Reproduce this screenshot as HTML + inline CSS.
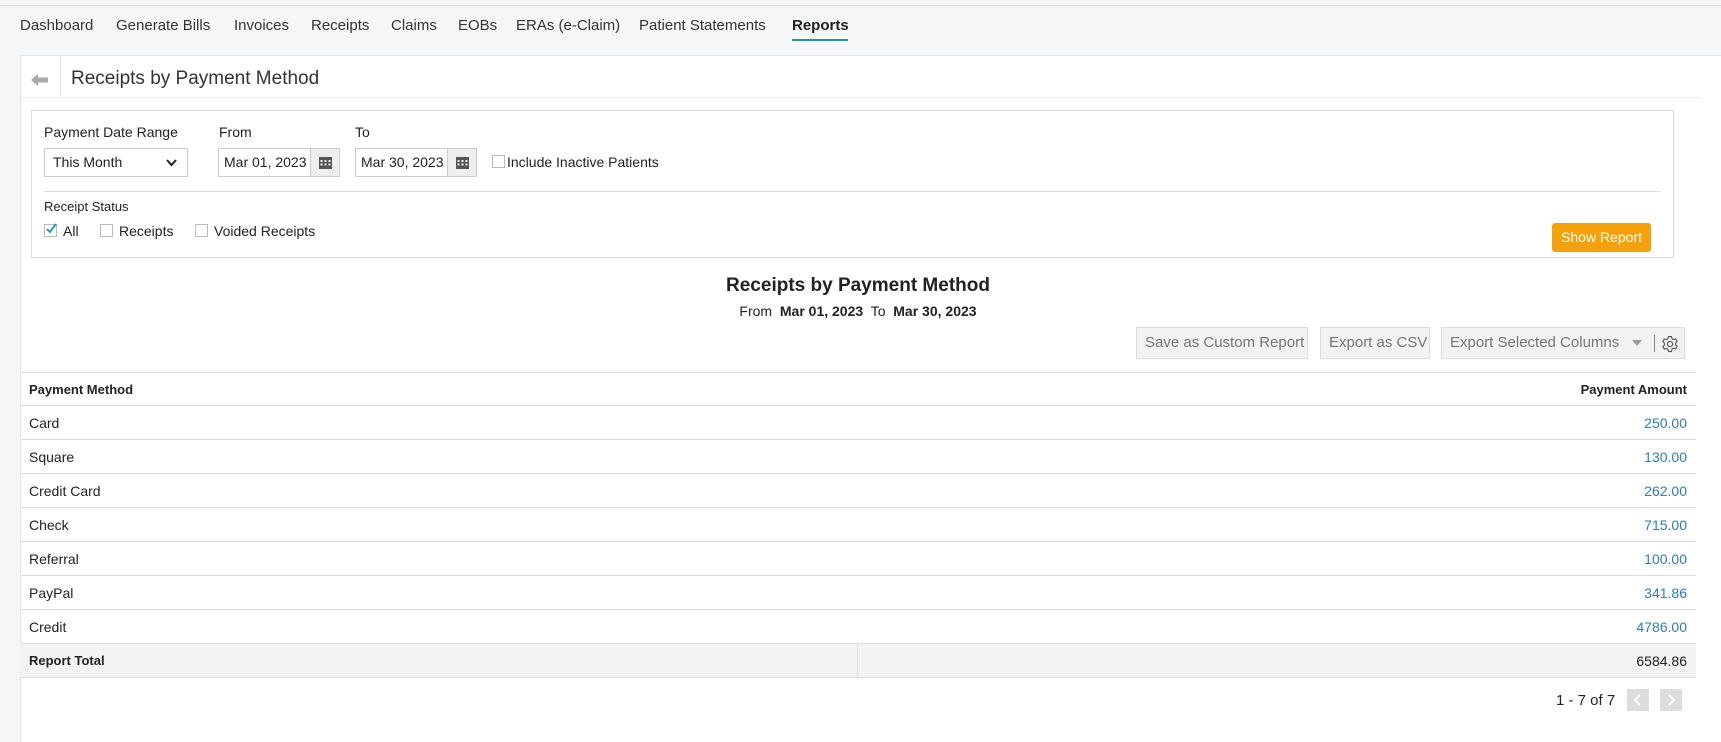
<!DOCTYPE html>
<html><head><meta charset="utf-8"><style>
*{box-sizing:border-box;margin:0;padding:0}
body{width:1721px;height:742px;overflow:hidden;background:#f5f6f8;font-family:"Liberation Sans",sans-serif;font-size:14px;color:#222;position:relative}
.a{position:absolute;white-space:nowrap}
.nav{top:17px;font-size:15px;color:#333}
.panel{position:absolute;left:20px;top:55px;width:1701px;height:687px;background:#fff;border-left:1px solid #e3e3e3;border-top:1px solid #e6e6e6}
.box{position:absolute;left:31px;top:110px;width:1643px;height:148px;border:1px solid #ddd;background:#fff}
.inp{position:absolute;border:1px solid #ccc;background:#fff;height:29px;font-size:14px;line-height:27px}
.cal{position:absolute;right:0;top:0;width:29px;height:27px;background:#eee;border-left:1px solid #ccc}
.cb{position:absolute;width:13px;height:13px;border:1px solid #bbb;background:#fff}
.btn{position:absolute;top:327px;height:32px;background:#f2f2f2;border:1px solid #ddd;color:#777;font-size:15px;line-height:30px;padding-left:8px}
.row{position:absolute;left:20px;width:1676px;height:34px;border-bottom:1px solid #ddd;line-height:34px}
.row span.l{position:absolute;left:9px}
.row span.r{position:absolute;right:9px;color:#2f7db5}
</style></head><body>
<div class="a" style="left:0;top:5px;width:1721px;height:1px;background:#e0e0e0"></div>
<div class="a nav" style="left:20px">Dashboard</div>
<div class="a nav" style="left:116px">Generate Bills</div>
<div class="a nav" style="left:234px">Invoices</div>
<div class="a nav" style="left:311px">Receipts</div>
<div class="a nav" style="left:391px">Claims</div>
<div class="a nav" style="left:458px">EOBs</div>
<div class="a nav" style="left:516px">ERAs (e-Claim)</div>
<div class="a nav" style="left:639px">Patient Statements</div>
<div class="a nav" style="left:792px;font-weight:bold;color:#222">Reports</div>
<div class="a" style="left:792px;top:39px;width:56px;height:2px;background:#1f9a9a"></div>
<div class="panel"></div>
<svg class="a" style="left:31px;top:73px" width="18" height="14"><path d="M0 7 L7 1 L7 4.5 L17 4.5 L17 9.5 L7 9.5 L7 13 Z" fill="#aaa"/></svg>
<div class="a" style="left:60px;top:56px;width:1px;height:42px;background:#e3e3e3"></div>
<div class="a" style="left:71px;top:68px;font-size:19px;color:#333">Receipts by Payment Method</div>
<div class="a" style="left:21px;top:97px;width:1680px;height:1px;background:#eee"></div>
<div class="box"></div>
<div class="a" style="left:44px;top:124px">Payment Date Range</div>
<div class="a" style="left:219px;top:124px">From</div>
<div class="a" style="left:355px;top:124px">To</div>
<div class="inp" style="left:44px;top:148px;width:144px;padding-left:8px">This Month<svg style="position:absolute;right:10px;top:10px" width="11" height="8"><path d="M1 1 L5.5 6 L10 1" stroke="#222" stroke-width="2" fill="none"/></svg></div>
<div class="inp" style="left:218px;top:148px;width:122px;padding-left:5px">Mar 01, 2023<div class="cal"><svg style="margin:7px 8px" width="13" height="13"><rect x="0" y="1" width="13" height="12" fill="#555"/><g fill="#eee"><rect x="1.5" y="4" width="2" height="2"/><rect x="5.5" y="4" width="2" height="2"/><rect x="9.5" y="4" width="2" height="2"/><rect x="1.5" y="7.5" width="2" height="2"/><rect x="5.5" y="7.5" width="2" height="2"/><rect x="9.5" y="7.5" width="2" height="2"/></g></svg></div></div>
<div class="inp" style="left:355px;top:148px;width:122px;padding-left:5px">Mar 30, 2023<div class="cal"><svg style="margin:7px 8px" width="13" height="13"><rect x="0" y="1" width="13" height="12" fill="#555"/><g fill="#eee"><rect x="1.5" y="4" width="2" height="2"/><rect x="5.5" y="4" width="2" height="2"/><rect x="9.5" y="4" width="2" height="2"/><rect x="1.5" y="7.5" width="2" height="2"/><rect x="5.5" y="7.5" width="2" height="2"/><rect x="9.5" y="7.5" width="2" height="2"/></g></svg></div></div>
<div class="cb" style="left:492px;top:155px"></div>
<div class="a" style="left:507px;top:154px">Include Inactive Patients</div>
<div class="a" style="left:44px;top:191px;width:1617px;height:1px;background:#ddd"></div>
<div class="a" style="left:44px;top:199px;font-size:13px">Receipt Status</div>
<div class="cb" style="left:44px;top:224px"></div>
<svg class="a" style="left:45px;top:222px" width="13" height="13"><path d="M2 7 L5 10 L11 2" stroke="#2a9bb5" stroke-width="2" fill="none"/></svg>
<div class="a" style="left:63px;top:223px">All</div>
<div class="cb" style="left:100px;top:224px"></div>
<div class="a" style="left:119px;top:223px">Receipts</div>
<div class="cb" style="left:195px;top:224px"></div>
<div class="a" style="left:214px;top:223px">Voided Receipts</div>
<div class="a" style="left:1552px;top:223px;width:99px;height:29px;background:#f5a10a;border-radius:3px;color:#fff;font-size:14px;line-height:29px;text-align:center">Show Report</div>
<div class="a" style="left:20px;top:275px;width:1676px;text-align:center;font-size:19px;font-weight:bold">Receipts by Payment Method</div>
<div class="a" style="left:20px;top:303px;width:1676px;text-align:center;font-size:14px">From &nbsp;<b>Mar 01, 2023</b>&nbsp; To &nbsp;<b>Mar 30, 2023</b></div>
<div class="btn" style="left:1136px;width:172px">Save as Custom Report</div>
<div class="btn" style="left:1320px;width:110px">Export as CSV</div>
<div class="btn" style="left:1441px;width:244px">Export Selected Columns<svg style="position:absolute;left:190px;top:12px" width="10" height="6"><path d="M0 0 L10 0 L5 6Z" fill="#999"/></svg><span style="position:absolute;left:212px;top:7px;width:1px;height:17px;background:#888"></span><svg style="position:absolute;left:219px;top:7px" width="18" height="18" viewBox="0 0 24 24"><circle cx="12" cy="12" r="3.5" fill="none" stroke="#555" stroke-width="1.5"/><path d="M10 2h4l.6 2.8 2.3 1.3 2.7-.9 2 3.4-2.1 1.9v2.6l2.1 1.9-2 3.4-2.7-.9-2.3 1.3L14 22h-4l-.6-2.8-2.3-1.3-2.7.9-2-3.4 2.1-1.9v-2.6L2.4 8.6l2-3.4 2.7.9 2.3-1.3z" fill="none" stroke="#555" stroke-width="1.5"/></svg></div>
<div class="row" style="top:372px;border-top:1px solid #ddd;font-weight:bold;font-size:13px"><span class="l">Payment Method</span><span class="r" style="color:#222">Payment Amount</span></div>
<div class="row" style="top:406px"><span class="l">Card</span><span class="r">250.00</span></div>
<div class="row" style="top:440px"><span class="l">Square</span><span class="r">130.00</span></div>
<div class="row" style="top:474px"><span class="l">Credit Card</span><span class="r">262.00</span></div>
<div class="row" style="top:508px"><span class="l">Check</span><span class="r">715.00</span></div>
<div class="row" style="top:542px"><span class="l">Referral</span><span class="r">100.00</span></div>
<div class="row" style="top:576px"><span class="l">PayPal</span><span class="r">341.86</span></div>
<div class="row" style="top:610px"><span class="l">Credit</span><span class="r">4786.00</span></div>
<div class="row" style="top:644px;background:#f3f3f3;font-size:13px"><span class="l" style="font-weight:bold">Report Total</span><span style="position:absolute;left:837px;top:0;width:1px;height:34px;background:#ddd"></span><span class="r" style="color:#222;font-size:14px">6584.86</span></div>
<div class="a" style="left:1556px;top:692px;font-size:15px">1 - 7 of 7</div>
<div class="a" style="left:1627px;top:689px;width:22px;height:22px;background:#ddd"><svg width="22" height="22"><path d="M13 6 L8 11 L13 16" stroke="#fff" stroke-width="2" fill="none"/></svg></div>
<div class="a" style="left:1660px;top:689px;width:22px;height:22px;background:#ddd"><svg width="22" height="22"><path d="M9 6 L14 11 L9 16" stroke="#fff" stroke-width="2" fill="none"/></svg></div>
</body></html>
